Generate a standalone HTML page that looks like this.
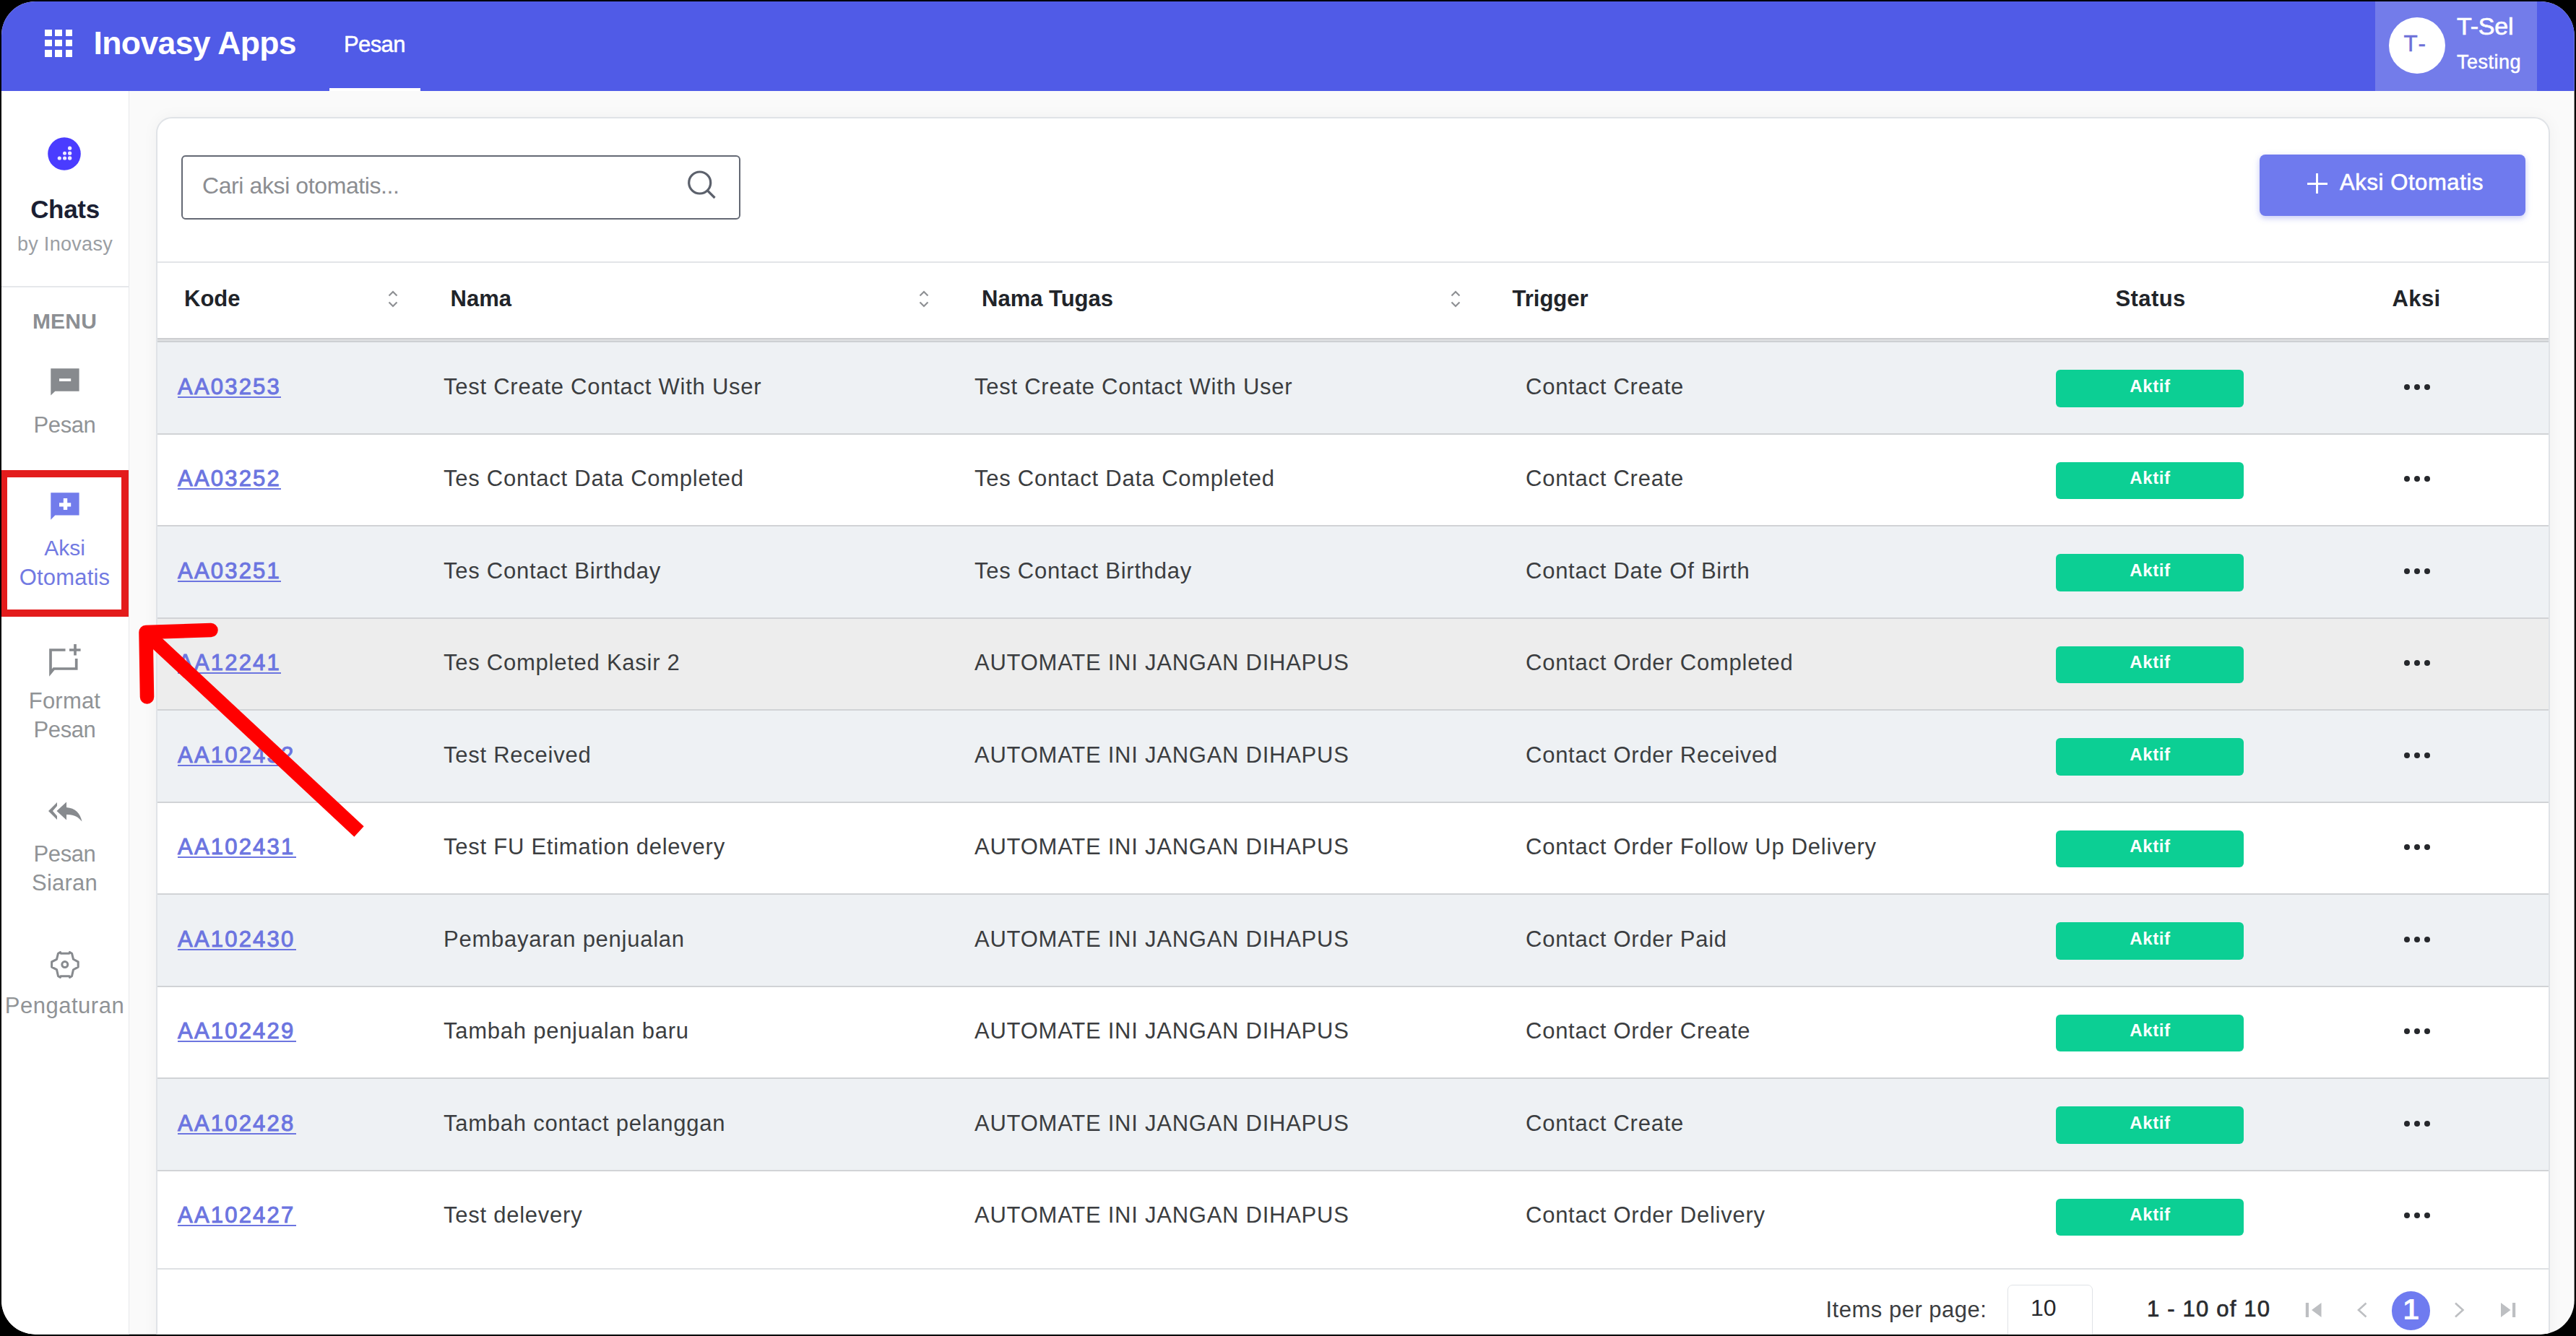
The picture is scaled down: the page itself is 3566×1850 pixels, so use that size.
<!DOCTYPE html>
<html><head><meta charset="utf-8"><title>Aksi Otomatis</title>
<style>
html,body{margin:0;padding:0}
body{width:3566px;height:1850px;background:#000;position:relative;overflow:hidden;font-family:"Liberation Sans",sans-serif}
#app{position:absolute;left:0;top:0;width:3566px;height:1850px;background:#fafafa;clip-path:inset(2px 2.3px 2.3px 2px round 47px)}
.t{position:absolute;line-height:1;white-space:nowrap;font-family:"Liberation Sans",sans-serif}
.abs{position:absolute}
</style></head><body>
<div id="app">
<div class="abs" style="left:0;top:0;width:3566px;height:125.5px;background:#505be7"></div>
<div class="abs" style="left:62.0px;top:40.5px;width:9.5px;height:9.5px;background:#fff"></div>
<div class="abs" style="left:76.3px;top:40.5px;width:9.5px;height:9.5px;background:#fff"></div>
<div class="abs" style="left:90.6px;top:40.5px;width:9.5px;height:9.5px;background:#fff"></div>
<div class="abs" style="left:62.0px;top:54.8px;width:9.5px;height:9.5px;background:#fff"></div>
<div class="abs" style="left:76.3px;top:54.8px;width:9.5px;height:9.5px;background:#fff"></div>
<div class="abs" style="left:90.6px;top:54.8px;width:9.5px;height:9.5px;background:#fff"></div>
<div class="abs" style="left:62.0px;top:69.1px;width:9.5px;height:9.5px;background:#fff"></div>
<div class="abs" style="left:76.3px;top:69.1px;width:9.5px;height:9.5px;background:#fff"></div>
<div class="abs" style="left:90.6px;top:69.1px;width:9.5px;height:9.5px;background:#fff"></div>
<div class="t" style="left:129.5px;top:38.2px;font-size:44.5px;color:#fff;font-weight:700;letter-spacing:-0.6px;">Inovasy Apps</div>
<div class="t" style="left:476.0px;top:45.7px;font-size:31px;color:#fff;font-weight:400;letter-spacing:-0.6px;-webkit-text-stroke:0.5px #fff">Pesan</div>
<div class="abs" style="left:456px;top:122px;width:126px;height:4px;background:#fff"></div>
<div class="abs" style="left:3288px;top:0;width:224px;height:125.5px;background:#737cea"></div>
<div class="abs" style="left:3306.5px;top:24px;width:78px;height:78px;border-radius:50%;background:#fff"></div>
<div class="t" style="left:3327.5px;top:44.9px;font-size:31.5px;color:#6d70d8;font-weight:400;letter-spacing:2.6px;-webkit-text-stroke:0.5px #6d70d8">T-</div>
<div class="t" style="left:3401.0px;top:18.9px;font-size:34px;color:#fff;font-weight:400;letter-spacing:-0.2px;-webkit-text-stroke:0.7px #fff">T-Sel</div>
<div class="t" style="left:3401.0px;top:72.5px;font-size:27px;color:#fff;font-weight:400;letter-spacing:0.5px;-webkit-text-stroke:0.5px #fff">Testing</div>
<div class="abs" style="left:0;top:125.5px;width:178px;height:1730px;background:#fff;border-right:1.5px solid #e6e8eb"></div>
<svg class="abs" style="left:66px;top:189.5px" width="46" height="46" viewBox="0 0 46 46">
<circle cx="23" cy="23" r="22.8" fill="#4a3cff"/>
<g fill="#fff" opacity="0.9">
<circle cx="16.3" cy="29" r="2.6"/><circle cx="23.6" cy="29" r="2.6"/><circle cx="30.6" cy="29" r="2.7"/>
<circle cx="23.5" cy="22.2" r="2.5"/><circle cx="30.6" cy="22.2" r="2.6"/>
<circle cx="30.6" cy="15.2" r="2.6"/>
</g></svg>
<div class="t" style="left:2.0px;width:176px;text-align:center;top:271.6px;font-size:35px;color:#1b1f33;font-weight:700;letter-spacing:-0.3px;">Chats</div>
<div class="t" style="left:2.0px;width:176px;text-align:center;top:324.6px;font-size:27px;color:#9a9ea3;font-weight:400;letter-spacing:0.3px;">by Inovasy</div>
<div class="abs" style="left:0;top:396px;width:178px;height:1.5px;background:#e6e8eb"></div>
<div class="t" style="left:1.5px;width:176px;text-align:center;top:429.5px;font-size:30px;color:#8c8f93;font-weight:700;letter-spacing:0.2px;">MENU</div>
<svg class="abs" style="left:68px;top:508px" width="44" height="42" viewBox="0 0 44 42">
<path d="M2.3 2.3 H41.6 V33.8 H8.3 L2.3 39.6 Z" fill="#878a8e"/>
<rect x="14" y="16.2" width="16.2" height="3.8" fill="#fff"/>
</svg>
<div class="t" style="left:1.5px;width:176px;text-align:center;top:573.0px;font-size:31px;color:#909396;font-weight:400;letter-spacing:-0.4px;">Pesan</div>
<svg class="abs" style="left:68px;top:680px" width="44" height="42" viewBox="0 0 44 42">
<path d="M2.3 2.2 H41.6 V33.6 H8.3 L2.3 39.7 Z" fill="#727ceb"/>
<rect x="14" y="16.3" width="16.2" height="5.2" fill="#fff"/>
<rect x="19.8" y="10" width="5.4" height="16" fill="#fff"/>
</svg>
<div class="t" style="left:1.5px;width:176px;text-align:center;top:744.0px;font-size:30px;color:#727ae2;font-weight:400;letter-spacing:0px;">Aksi</div>
<div class="t" style="left:1.5px;width:176px;text-align:center;top:783.6px;font-size:31px;color:#727ae2;font-weight:400;letter-spacing:0.2px;">Otomatis</div>
<svg class="abs" style="left:64px;top:888px" width="52" height="50" viewBox="0 0 52 50">
<path d="M26.5 12 H6 V43.5 L10.5 38 H41.7 V24" fill="none" stroke="#878a8e" stroke-width="3.7"/>
<path d="M32 12 H47.6 M40 4 V19.6" fill="none" stroke="#878a8e" stroke-width="3.7"/>
</svg>
<div class="t" style="left:1.5px;width:176px;text-align:center;top:955.1px;font-size:31px;color:#909396;font-weight:400;letter-spacing:0.2px;">Format</div>
<div class="t" style="left:1.5px;width:176px;text-align:center;top:994.9px;font-size:31px;color:#909396;font-weight:400;letter-spacing:-0.4px;">Pesan</div>
<svg class="abs" style="left:64px;top:1106px" width="54" height="34" viewBox="0 0 54 34">
<path d="M3 17 L15 5 V10 L9 17 L15 24 V29 Z" fill="#878a8e"/>
<path d="M28 4.5 L14.5 17 L28 29.5 V22 C38 21.5 44 25 49.5 31.5 C47 20 40 13 28 12 Z" fill="#878a8e"/>
</svg>
<div class="t" style="left:1.5px;width:176px;text-align:center;top:1166.7px;font-size:31px;color:#909396;font-weight:400;letter-spacing:-0.4px;">Pesan</div>
<div class="t" style="left:1.5px;width:176px;text-align:center;top:1206.5px;font-size:31px;color:#909396;font-weight:400;letter-spacing:0.2px;">Siaran</div>
<svg class="abs" style="left:68px;top:1315px" width="44" height="42" viewBox="0 0 44 42">
<path d="M12.5 5.2 L15.5 3.5 L16 5.2 H28 L28.5 3.5 L31.5 5.2 L33.5 13.3 L40.2 16.9 V24.1 L33.5 27.7 L31.5 36.7 L28.5 38.4 L28 36.7 H16 L15.5 38.4 L12.5 36.7 L10.5 27.7 L3.6 24.1 V16.9 L10.5 13.3 Z" fill="none" stroke="#878a8e" stroke-width="3" stroke-linejoin="round"/>
<circle cx="21.8" cy="20.6" r="4" fill="none" stroke="#878a8e" stroke-width="3"/>
</svg>
<div class="t" style="left:-5.5px;width:190px;text-align:center;top:1377.1px;font-size:31px;color:#909396;font-weight:400;letter-spacing:0.5px;">Pengaturan</div>
<div class="abs" style="left:216px;top:162px;width:3309.6px;height:1750px;background:#fff;border:2px solid #e0e3e7;border-radius:22px;box-shadow:0 0 22px rgba(0,0,0,0.045)"></div>
<div class="abs" style="left:250.5px;top:214.5px;width:770px;height:85px;border:2px solid #646974;border-radius:6px;background:#fff"></div>
<div class="t" style="left:280.0px;top:240.5px;font-size:32px;color:#8b8d91;font-weight:400;letter-spacing:-0.4px;">Cari aksi otomatis...</div>
<svg class="abs" style="left:948px;top:232px" width="48" height="48" viewBox="0 0 48 48">
<circle cx="20.7" cy="21" r="15" fill="none" stroke="#5c616c" stroke-width="3.2"/>
<path d="M31.5 32 L41.5 42" stroke="#5c616c" stroke-width="3.2"/>
</svg>
<div class="abs" style="left:3128px;top:214px;width:368px;height:85px;border-radius:8px;background:#6f7aee;box-shadow:0 3px 8px rgba(90,100,230,0.35)"></div>
<div class="abs" style="left:3193.5px;top:252.5px;width:28px;height:3.2px;background:#fff"></div>
<div class="abs" style="left:3206px;top:240px;width:3.2px;height:28px;background:#fff"></div>
<div class="t" style="left:3239.0px;top:237.0px;font-size:31px;color:#fff;font-weight:400;letter-spacing:0.6px;-webkit-text-stroke:0.6px #fff">Aksi Otomatis</div>
<div class="abs" style="left:218px;top:362px;width:3309.6px;height:2px;background:#e3e5e8"></div>
<div class="t" style="left:255.0px;top:397.6px;font-size:31px;color:#212429;font-weight:700;letter-spacing:0px;">Kode</div>
<div class="t" style="left:623.5px;top:397.6px;font-size:31px;color:#212429;font-weight:700;letter-spacing:0px;">Nama</div>
<div class="t" style="left:1359.0px;top:397.6px;font-size:31px;color:#212429;font-weight:700;letter-spacing:0px;">Nama Tugas</div>
<div class="t" style="left:2093.5px;top:397.6px;font-size:31px;color:#212429;font-weight:700;letter-spacing:0px;">Trigger</div>
<div class="t" style="left:2928.5px;top:397.6px;font-size:31px;color:#212429;font-weight:700;letter-spacing:0.4px;">Status</div>
<div class="t" style="left:3311.5px;top:397.6px;font-size:31px;color:#212429;font-weight:700;letter-spacing:0.4px;">Aksi</div>
<svg class="abs" style="left:535.5px;top:400px" width="16" height="28" viewBox="0 0 16 28"><path d="M2.5 9.5 L8 4 L13.5 9.5 M2.5 18.5 L8 24 L13.5 18.5" fill="none" stroke="#8e9094" stroke-width="2.2"/></svg>
<svg class="abs" style="left:1270.5px;top:400px" width="16" height="28" viewBox="0 0 16 28"><path d="M2.5 9.5 L8 4 L13.5 9.5 M2.5 18.5 L8 24 L13.5 18.5" fill="none" stroke="#8e9094" stroke-width="2.2"/></svg>
<svg class="abs" style="left:2006.5px;top:400px" width="16" height="28" viewBox="0 0 16 28"><path d="M2.5 9.5 L8 4 L13.5 9.5 M2.5 18.5 L8 24 L13.5 18.5" fill="none" stroke="#8e9094" stroke-width="2.2"/></svg>
<div class="abs" style="left:218px;top:473.5px;width:3309.6px;height:127.5px;background:#eef1f4"></div>
<div class="abs" style="left:218px;top:601.0px;width:3309.6px;height:127.5px;background:#fff"></div>
<div class="abs" style="left:218px;top:728.5px;width:3309.6px;height:127.5px;background:#eef1f4"></div>
<div class="abs" style="left:218px;top:856.0px;width:3309.6px;height:127.5px;background:#ededed"></div>
<div class="abs" style="left:218px;top:983.5px;width:3309.6px;height:127.5px;background:#eef1f4"></div>
<div class="abs" style="left:218px;top:1111.0px;width:3309.6px;height:127.5px;background:#fff"></div>
<div class="abs" style="left:218px;top:1238.5px;width:3309.6px;height:127.5px;background:#eef1f4"></div>
<div class="abs" style="left:218px;top:1366.0px;width:3309.6px;height:127.5px;background:#fff"></div>
<div class="abs" style="left:218px;top:1493.5px;width:3309.6px;height:127.5px;background:#eef1f4"></div>
<div class="abs" style="left:218px;top:1621.0px;width:3309.6px;height:136px;background:#fff"></div>
<div class="abs" style="left:218px;top:599.6px;width:3309.6px;height:2px;background:#d1d3d6"></div>
<div class="abs" style="left:218px;top:727.1px;width:3309.6px;height:2px;background:#d1d3d6"></div>
<div class="abs" style="left:218px;top:854.6px;width:3309.6px;height:2px;background:#d1d3d6"></div>
<div class="abs" style="left:218px;top:982.1px;width:3309.6px;height:2px;background:#d1d3d6"></div>
<div class="abs" style="left:218px;top:1109.6px;width:3309.6px;height:2px;background:#d1d3d6"></div>
<div class="abs" style="left:218px;top:1237.1px;width:3309.6px;height:2px;background:#d1d3d6"></div>
<div class="abs" style="left:218px;top:1364.6px;width:3309.6px;height:2px;background:#d1d3d6"></div>
<div class="abs" style="left:218px;top:1492.1px;width:3309.6px;height:2px;background:#d1d3d6"></div>
<div class="abs" style="left:218px;top:1619.6px;width:3309.6px;height:2px;background:#d1d3d6"></div>
<div class="abs" style="left:218px;top:1756px;width:3309.6px;height:1.8px;background:#dfe1e4"></div>
<div class="abs" style="left:218px;top:467.8px;width:3309.6px;height:6.3px;background:#dfe0e2"></div>
<div class="abs" style="left:218px;top:467.8px;width:3309.6px;height:2.4px;background:#cdced1"></div>
<div class="abs" style="left:218px;top:471.8px;width:3309.6px;height:2.3px;background:#cdd0d3"></div>
<div class="t" style="left:246.0px;top:519.6px;font-size:31px;color:#6c75e0;font-weight:400;letter-spacing:2.2px;-webkit-text-stroke:1px #6c75e0">AA03253</div>
<div class="abs" style="left:246px;top:548.5px;width:142.5px;height:2px;background:#6c75e0"></div>
<div class="t" style="left:614.0px;top:519.6px;font-size:31px;color:#3b3d40;font-weight:400;letter-spacing:0.75px;">Test Create Contact With User</div>
<div class="t" style="left:1349.0px;top:519.6px;font-size:31px;color:#3b3d40;font-weight:400;letter-spacing:0.75px;">Test Create Contact With User</div>
<div class="t" style="left:2112.0px;top:519.6px;font-size:31px;color:#3b3d40;font-weight:400;letter-spacing:0.75px;">Contact Create</div>
<div class="abs" style="left:2846px;top:512.0px;width:260px;height:51.5px;border-radius:6px;background:#0ccf94"></div>
<div class="t" style="left:2876.5px;width:200px;text-align:center;top:522.6px;font-size:24px;color:#fff;font-weight:700;letter-spacing:0.6px;">Aktif</div>
<div class="abs" style="left:3327.5px;top:531.5px;width:8px;height:8px;border-radius:50%;background:#26282c"></div>
<div class="abs" style="left:3341.5px;top:531.5px;width:8px;height:8px;border-radius:50%;background:#26282c"></div>
<div class="abs" style="left:3355.5px;top:531.5px;width:8px;height:8px;border-radius:50%;background:#26282c"></div>
<div class="t" style="left:246.0px;top:647.1px;font-size:31px;color:#6c75e0;font-weight:400;letter-spacing:2.2px;-webkit-text-stroke:1px #6c75e0">AA03252</div>
<div class="abs" style="left:246px;top:676.0px;width:142.5px;height:2px;background:#6c75e0"></div>
<div class="t" style="left:614.0px;top:647.1px;font-size:31px;color:#3b3d40;font-weight:400;letter-spacing:0.75px;">Tes Contact Data Completed</div>
<div class="t" style="left:1349.0px;top:647.1px;font-size:31px;color:#3b3d40;font-weight:400;letter-spacing:0.75px;">Tes Contact Data Completed</div>
<div class="t" style="left:2112.0px;top:647.1px;font-size:31px;color:#3b3d40;font-weight:400;letter-spacing:0.75px;">Contact Create</div>
<div class="abs" style="left:2846px;top:639.5px;width:260px;height:51.5px;border-radius:6px;background:#0ccf94"></div>
<div class="t" style="left:2876.5px;width:200px;text-align:center;top:650.1px;font-size:24px;color:#fff;font-weight:700;letter-spacing:0.6px;">Aktif</div>
<div class="abs" style="left:3327.5px;top:659.0px;width:8px;height:8px;border-radius:50%;background:#26282c"></div>
<div class="abs" style="left:3341.5px;top:659.0px;width:8px;height:8px;border-radius:50%;background:#26282c"></div>
<div class="abs" style="left:3355.5px;top:659.0px;width:8px;height:8px;border-radius:50%;background:#26282c"></div>
<div class="t" style="left:246.0px;top:774.6px;font-size:31px;color:#6c75e0;font-weight:400;letter-spacing:2.2px;-webkit-text-stroke:1px #6c75e0">AA03251</div>
<div class="abs" style="left:246px;top:803.5px;width:142.5px;height:2px;background:#6c75e0"></div>
<div class="t" style="left:614.0px;top:774.6px;font-size:31px;color:#3b3d40;font-weight:400;letter-spacing:0.75px;">Tes Contact Birthday</div>
<div class="t" style="left:1349.0px;top:774.6px;font-size:31px;color:#3b3d40;font-weight:400;letter-spacing:0.75px;">Tes Contact Birthday</div>
<div class="t" style="left:2112.0px;top:774.6px;font-size:31px;color:#3b3d40;font-weight:400;letter-spacing:0.75px;">Contact Date Of Birth</div>
<div class="abs" style="left:2846px;top:767.0px;width:260px;height:51.5px;border-radius:6px;background:#0ccf94"></div>
<div class="t" style="left:2876.5px;width:200px;text-align:center;top:777.6px;font-size:24px;color:#fff;font-weight:700;letter-spacing:0.6px;">Aktif</div>
<div class="abs" style="left:3327.5px;top:786.5px;width:8px;height:8px;border-radius:50%;background:#26282c"></div>
<div class="abs" style="left:3341.5px;top:786.5px;width:8px;height:8px;border-radius:50%;background:#26282c"></div>
<div class="abs" style="left:3355.5px;top:786.5px;width:8px;height:8px;border-radius:50%;background:#26282c"></div>
<div class="t" style="left:246.0px;top:902.1px;font-size:31px;color:#6c75e0;font-weight:400;letter-spacing:2.2px;-webkit-text-stroke:1px #6c75e0">AA12241</div>
<div class="abs" style="left:246px;top:931.0px;width:142.5px;height:2px;background:#6c75e0"></div>
<div class="t" style="left:614.0px;top:902.1px;font-size:31px;color:#3b3d40;font-weight:400;letter-spacing:0.75px;">Tes Completed Kasir 2</div>
<div class="t" style="left:1349.0px;top:902.1px;font-size:31px;color:#3b3d40;font-weight:400;letter-spacing:0.75px;">AUTOMATE INI JANGAN DIHAPUS</div>
<div class="t" style="left:2112.0px;top:902.1px;font-size:31px;color:#3b3d40;font-weight:400;letter-spacing:0.75px;">Contact Order Completed</div>
<div class="abs" style="left:2846px;top:894.5px;width:260px;height:51.5px;border-radius:6px;background:#0ccf94"></div>
<div class="t" style="left:2876.5px;width:200px;text-align:center;top:905.1px;font-size:24px;color:#fff;font-weight:700;letter-spacing:0.6px;">Aktif</div>
<div class="abs" style="left:3327.5px;top:914.0px;width:8px;height:8px;border-radius:50%;background:#26282c"></div>
<div class="abs" style="left:3341.5px;top:914.0px;width:8px;height:8px;border-radius:50%;background:#26282c"></div>
<div class="abs" style="left:3355.5px;top:914.0px;width:8px;height:8px;border-radius:50%;background:#26282c"></div>
<div class="t" style="left:246.0px;top:1029.7px;font-size:31px;color:#6c75e0;font-weight:400;letter-spacing:2.2px;-webkit-text-stroke:1px #6c75e0">AA102432</div>
<div class="abs" style="left:246px;top:1058.5px;width:163.6px;height:2px;background:#6c75e0"></div>
<div class="t" style="left:614.0px;top:1029.7px;font-size:31px;color:#3b3d40;font-weight:400;letter-spacing:0.75px;">Test Received</div>
<div class="t" style="left:1349.0px;top:1029.7px;font-size:31px;color:#3b3d40;font-weight:400;letter-spacing:0.75px;">AUTOMATE INI JANGAN DIHAPUS</div>
<div class="t" style="left:2112.0px;top:1029.7px;font-size:31px;color:#3b3d40;font-weight:400;letter-spacing:0.75px;">Contact Order Received</div>
<div class="abs" style="left:2846px;top:1022.0px;width:260px;height:51.5px;border-radius:6px;background:#0ccf94"></div>
<div class="t" style="left:2876.5px;width:200px;text-align:center;top:1032.6px;font-size:24px;color:#fff;font-weight:700;letter-spacing:0.6px;">Aktif</div>
<div class="abs" style="left:3327.5px;top:1041.5px;width:8px;height:8px;border-radius:50%;background:#26282c"></div>
<div class="abs" style="left:3341.5px;top:1041.5px;width:8px;height:8px;border-radius:50%;background:#26282c"></div>
<div class="abs" style="left:3355.5px;top:1041.5px;width:8px;height:8px;border-radius:50%;background:#26282c"></div>
<div class="t" style="left:246.0px;top:1157.2px;font-size:31px;color:#6c75e0;font-weight:400;letter-spacing:2.2px;-webkit-text-stroke:1px #6c75e0">AA102431</div>
<div class="abs" style="left:246px;top:1186.0px;width:163.6px;height:2px;background:#6c75e0"></div>
<div class="t" style="left:614.0px;top:1157.2px;font-size:31px;color:#3b3d40;font-weight:400;letter-spacing:0.75px;">Test FU Etimation delevery</div>
<div class="t" style="left:1349.0px;top:1157.2px;font-size:31px;color:#3b3d40;font-weight:400;letter-spacing:0.75px;">AUTOMATE INI JANGAN DIHAPUS</div>
<div class="t" style="left:2112.0px;top:1157.2px;font-size:31px;color:#3b3d40;font-weight:400;letter-spacing:0.75px;">Contact Order Follow Up Delivery</div>
<div class="abs" style="left:2846px;top:1149.5px;width:260px;height:51.5px;border-radius:6px;background:#0ccf94"></div>
<div class="t" style="left:2876.5px;width:200px;text-align:center;top:1160.1px;font-size:24px;color:#fff;font-weight:700;letter-spacing:0.6px;">Aktif</div>
<div class="abs" style="left:3327.5px;top:1169.0px;width:8px;height:8px;border-radius:50%;background:#26282c"></div>
<div class="abs" style="left:3341.5px;top:1169.0px;width:8px;height:8px;border-radius:50%;background:#26282c"></div>
<div class="abs" style="left:3355.5px;top:1169.0px;width:8px;height:8px;border-radius:50%;background:#26282c"></div>
<div class="t" style="left:246.0px;top:1284.7px;font-size:31px;color:#6c75e0;font-weight:400;letter-spacing:2.2px;-webkit-text-stroke:1px #6c75e0">AA102430</div>
<div class="abs" style="left:246px;top:1313.5px;width:163.6px;height:2px;background:#6c75e0"></div>
<div class="t" style="left:614.0px;top:1284.7px;font-size:31px;color:#3b3d40;font-weight:400;letter-spacing:0.75px;">Pembayaran penjualan</div>
<div class="t" style="left:1349.0px;top:1284.7px;font-size:31px;color:#3b3d40;font-weight:400;letter-spacing:0.75px;">AUTOMATE INI JANGAN DIHAPUS</div>
<div class="t" style="left:2112.0px;top:1284.7px;font-size:31px;color:#3b3d40;font-weight:400;letter-spacing:0.75px;">Contact Order Paid</div>
<div class="abs" style="left:2846px;top:1277.0px;width:260px;height:51.5px;border-radius:6px;background:#0ccf94"></div>
<div class="t" style="left:2876.5px;width:200px;text-align:center;top:1287.6px;font-size:24px;color:#fff;font-weight:700;letter-spacing:0.6px;">Aktif</div>
<div class="abs" style="left:3327.5px;top:1296.5px;width:8px;height:8px;border-radius:50%;background:#26282c"></div>
<div class="abs" style="left:3341.5px;top:1296.5px;width:8px;height:8px;border-radius:50%;background:#26282c"></div>
<div class="abs" style="left:3355.5px;top:1296.5px;width:8px;height:8px;border-radius:50%;background:#26282c"></div>
<div class="t" style="left:246.0px;top:1412.2px;font-size:31px;color:#6c75e0;font-weight:400;letter-spacing:2.2px;-webkit-text-stroke:1px #6c75e0">AA102429</div>
<div class="abs" style="left:246px;top:1441.0px;width:163.6px;height:2px;background:#6c75e0"></div>
<div class="t" style="left:614.0px;top:1412.2px;font-size:31px;color:#3b3d40;font-weight:400;letter-spacing:0.75px;">Tambah penjualan baru</div>
<div class="t" style="left:1349.0px;top:1412.2px;font-size:31px;color:#3b3d40;font-weight:400;letter-spacing:0.75px;">AUTOMATE INI JANGAN DIHAPUS</div>
<div class="t" style="left:2112.0px;top:1412.2px;font-size:31px;color:#3b3d40;font-weight:400;letter-spacing:0.75px;">Contact Order Create</div>
<div class="abs" style="left:2846px;top:1404.5px;width:260px;height:51.5px;border-radius:6px;background:#0ccf94"></div>
<div class="t" style="left:2876.5px;width:200px;text-align:center;top:1415.1px;font-size:24px;color:#fff;font-weight:700;letter-spacing:0.6px;">Aktif</div>
<div class="abs" style="left:3327.5px;top:1424.0px;width:8px;height:8px;border-radius:50%;background:#26282c"></div>
<div class="abs" style="left:3341.5px;top:1424.0px;width:8px;height:8px;border-radius:50%;background:#26282c"></div>
<div class="abs" style="left:3355.5px;top:1424.0px;width:8px;height:8px;border-radius:50%;background:#26282c"></div>
<div class="t" style="left:246.0px;top:1539.7px;font-size:31px;color:#6c75e0;font-weight:400;letter-spacing:2.2px;-webkit-text-stroke:1px #6c75e0">AA102428</div>
<div class="abs" style="left:246px;top:1568.5px;width:163.6px;height:2px;background:#6c75e0"></div>
<div class="t" style="left:614.0px;top:1539.7px;font-size:31px;color:#3b3d40;font-weight:400;letter-spacing:0.75px;">Tambah contact pelanggan</div>
<div class="t" style="left:1349.0px;top:1539.7px;font-size:31px;color:#3b3d40;font-weight:400;letter-spacing:0.75px;">AUTOMATE INI JANGAN DIHAPUS</div>
<div class="t" style="left:2112.0px;top:1539.7px;font-size:31px;color:#3b3d40;font-weight:400;letter-spacing:0.75px;">Contact Create</div>
<div class="abs" style="left:2846px;top:1532.0px;width:260px;height:51.5px;border-radius:6px;background:#0ccf94"></div>
<div class="t" style="left:2876.5px;width:200px;text-align:center;top:1542.6px;font-size:24px;color:#fff;font-weight:700;letter-spacing:0.6px;">Aktif</div>
<div class="abs" style="left:3327.5px;top:1551.5px;width:8px;height:8px;border-radius:50%;background:#26282c"></div>
<div class="abs" style="left:3341.5px;top:1551.5px;width:8px;height:8px;border-radius:50%;background:#26282c"></div>
<div class="abs" style="left:3355.5px;top:1551.5px;width:8px;height:8px;border-radius:50%;background:#26282c"></div>
<div class="t" style="left:246.0px;top:1667.2px;font-size:31px;color:#6c75e0;font-weight:400;letter-spacing:2.2px;-webkit-text-stroke:1px #6c75e0">AA102427</div>
<div class="abs" style="left:246px;top:1696.0px;width:163.6px;height:2px;background:#6c75e0"></div>
<div class="t" style="left:614.0px;top:1667.2px;font-size:31px;color:#3b3d40;font-weight:400;letter-spacing:0.75px;">Test delevery</div>
<div class="t" style="left:1349.0px;top:1667.2px;font-size:31px;color:#3b3d40;font-weight:400;letter-spacing:0.75px;">AUTOMATE INI JANGAN DIHAPUS</div>
<div class="t" style="left:2112.0px;top:1667.2px;font-size:31px;color:#3b3d40;font-weight:400;letter-spacing:0.75px;">Contact Order Delivery</div>
<div class="abs" style="left:2846px;top:1659.5px;width:260px;height:51.5px;border-radius:6px;background:#0ccf94"></div>
<div class="t" style="left:2876.5px;width:200px;text-align:center;top:1670.1px;font-size:24px;color:#fff;font-weight:700;letter-spacing:0.6px;">Aktif</div>
<div class="abs" style="left:3327.5px;top:1679.0px;width:8px;height:8px;border-radius:50%;background:#26282c"></div>
<div class="abs" style="left:3341.5px;top:1679.0px;width:8px;height:8px;border-radius:50%;background:#26282c"></div>
<div class="abs" style="left:3355.5px;top:1679.0px;width:8px;height:8px;border-radius:50%;background:#26282c"></div>
<div class="t" style="left:2527.5px;top:1797.5px;font-size:31px;color:#3b3d40;font-weight:400;letter-spacing:0.5px;">Items per page:</div>
<div class="abs" style="left:2778.5px;top:1778.5px;width:116px;height:100px;border:1.8px solid #dfe2e6;border-radius:7px;background:#fff"></div>
<div class="t" style="left:2811.0px;top:1795.3px;font-size:32px;color:#26282c;font-weight:400;letter-spacing:0px;">10</div>
<div class="t" style="left:2972.0px;top:1797.4px;font-size:31px;color:#2a2c30;font-weight:400;letter-spacing:1.2px;-webkit-text-stroke:0.7px #2a2c30">1 - 10 of 10</div>
<svg class="abs" style="left:3188px;top:1800px" width="300" height="28" viewBox="0 0 300 28">
<g fill="#bdbfc2" stroke="#bdbfc2">
<rect x="3.8" y="4" width="4.2" height="20" stroke="none"/>
<path d="M25.5 4 L12 14 L25.5 24 Z" stroke="none"/>
<path d="M87.5 4.5 L77 14 L87.5 23.5" fill="none" stroke-width="2.6"/>
<path d="M211 4.5 L221.5 14 L211 23.5" fill="none" stroke-width="2.6"/>
<path d="M274 4 L287.5 14 L274 24 Z" stroke="none"/>
<rect x="290" y="4" width="4.2" height="20" stroke="none"/>
</g></svg>
<div class="abs" style="left:3310.5px;top:1788px;width:53.5px;height:53.5px;border-radius:50%;background:#6f7bf0"></div>
<div class="t" style="left:3307.5px;width:60px;text-align:center;top:1792.5px;font-size:40px;color:#fff;font-weight:700;letter-spacing:0px;">1</div>
<div class="abs" style="left:0px;top:650.5px;width:157.7px;height:183.5px;border:10px solid #e31c1c"></div>
<svg class="abs" style="left:0;top:0" width="3566" height="1850" viewBox="0 0 3566 1850">
<path d="M497 1151.5 L206 880" stroke="#ff0000" stroke-width="19.5" fill="none"/>
<path d="M292 872.5 L202 875.5 L203.5 965" stroke="#ff0000" stroke-width="19.5" fill="none" stroke-linecap="round" stroke-linejoin="round"/>
</svg>
</div></body></html>
